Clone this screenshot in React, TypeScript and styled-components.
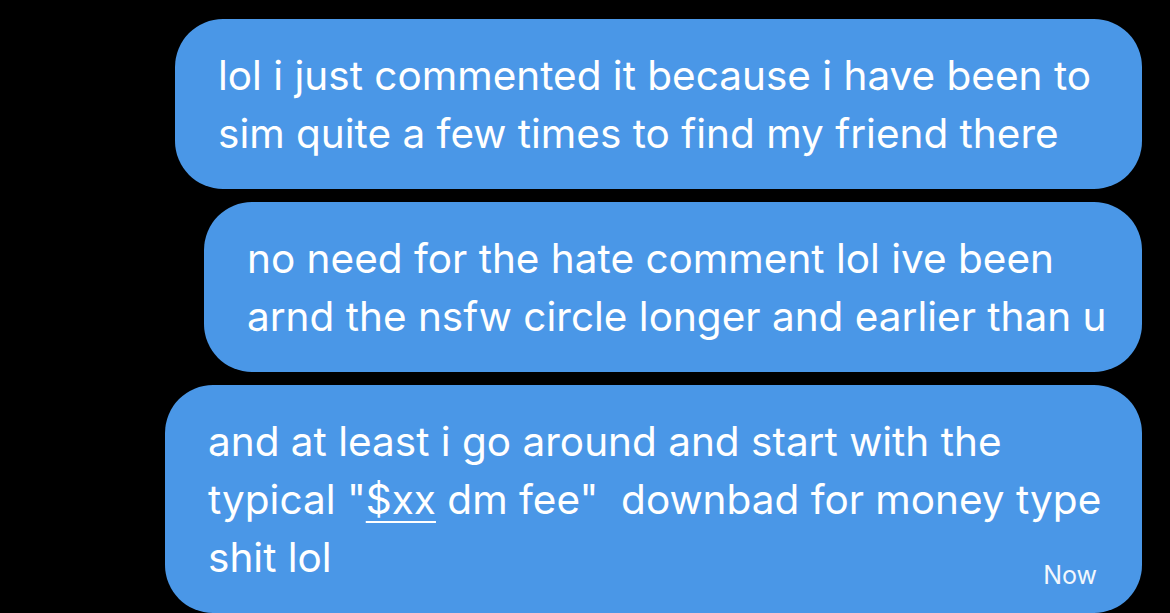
import React from "react";
import styled, { createGlobalStyle } from "styled-components";

const Global = createGlobalStyle`
  html, body {
    margin: 0;
    padding: 0;
    background: #000;
  }
  body {
    width: 1170px;
    height: 613px;
    overflow: hidden;
    font-family: Inter, "Noto Sans", "Liberation Sans", sans-serif;
  }
`;

const Thread = styled.div`
  display: flex;
  flex-direction: column;
  align-items: flex-end;
  gap: 13px;
  padding: 19px 28px 0 0;
`;

const Bubble = styled.div<{ $width: number }>`
  position: relative;
  box-sizing: border-box;
  width: ${(p) => p.$width}px;
  padding: 28px 40px 26px 43px;
  background: #4a97e7;
  border-radius: 48px;
  color: #fff;
  font-size: 40.5px;
  line-height: 58px;
`;

const Line = styled.div`
  white-space: pre;
`;

const LastLine = styled.div`
  display: flex;
  justify-content: space-between;
  align-items: flex-end;
`;

const Link = styled.span`
  text-decoration: underline;
  text-decoration-thickness: 2px;
  text-underline-offset: 7px;
`;

const Time = styled.span`
  font-size: 25px;
  line-height: 25px;
  margin: 0 5px -1px 0;
  color: #f2f7fd;
`;

export default function App() {
  return (
    <>
      <Global />
      <Thread>
        <Bubble $width={967}>
          <Line>lol i just commented it because i have been to</Line>
          <Line>sim quite a few times to find my friend there</Line>
        </Bubble>
        <Bubble $width={938}>
          <Line>no need for the hate comment lol ive been</Line>
          <Line>arnd the nsfw circle longer and earlier than u</Line>
        </Bubble>
        <Bubble $width={977}>
          <Line>and at least i go around and start with the</Line>
          <Line>
            typical "<Link>$xx</Link> dm fee"  downbad for money type
          </Line>
          <LastLine>
            <span>shit lol</span>
            <Time>Now</Time>
          </LastLine>
        </Bubble>
      </Thread>
    </>
  );
}
